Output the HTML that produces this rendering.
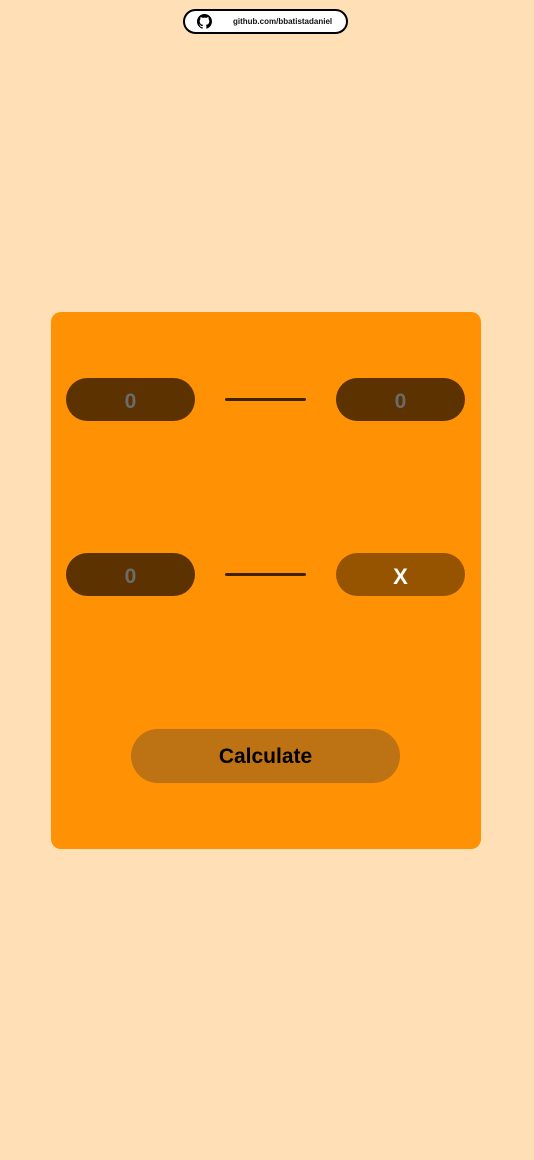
<!DOCTYPE html>
<html><head><meta charset="utf-8"><style>
html,body{margin:0;padding:0}
body{width:534px;height:1160px;background:#ffe0b6;position:relative;font-family:"Liberation Sans",sans-serif;overflow:hidden}
.badge{position:absolute;left:183px;top:9px;width:161px;height:21px;border:2px solid #000;border-radius:13px;background:#fff}
.badge span{position:absolute;left:48px;top:6px;font-size:8px;font-weight:bold;color:#111}
.badge svg{position:absolute;left:12px;top:3px}
.card{position:absolute;left:51px;top:312px;width:430px;height:537px;background:#ff9204;border-radius:10px}
.pill{position:absolute;width:129px;height:43px;border-radius:22px;background:#5c3200;color:#6b6b6b;font-weight:bold;font-size:21px;text-align:center;line-height:47px}
.line{position:absolute;width:81px;height:3px;border-radius:2px;background:#3d2200}
.x{background:#965400;color:#fff;font-size:22px}
.calc{position:absolute;left:80px;top:417px;width:269px;height:54px;border-radius:27px;background:#bd7213;color:#000;font-weight:bold;font-size:21px;text-align:center;line-height:56px}
</style></head><body>
<div class="badge"><svg width="15" height="15" viewBox="0 0 16 16"><path fill="#000" d="M8 0C3.58 0 0 3.58 0 8c0 3.540 2.29 6.53 5.47 7.59.4.07.55-.17.55-.38v-1.33c-2.230.48-2.7-1.07-2.7-1.07-.36-.92-.89-1.17-.89-1.17-.73-.5.06-.49.06-.49.8.06 1.23.83 1.23.83.71 1.22 1.870.87 2.33.66.07-.52.28-.87.5-1.07-1.78-.2-3.65-.89-3.65-3.95 0-.87.31-1.59.82-2.15-.08-.2-.36-1.02.08-2.12 0 0 .67-.21 2.2.82A7.6 7.6 0 018 3.86c.68 0 1.36.09 2 .27 1.53-1.04 2.2-.82 2.2-.82.44 1.1.16 1.92.08 2.12.51.56.82 1.27.82 2.15 0 3.07-1.87 3.75-3.65 3.95.29.25.54.73.54 1.48v2.2c0 .21.15.46.55.38A8 8 0 0016 8c0-4.42-3.58-8-8-8z"/></svg><span>github.com/bbatistadaniel</span></div>
<div class="card">
<div class="pill" style="left:15px;top:66px">0</div>
<div class="line" style="left:174px;top:86px"></div>
<div class="pill" style="left:285px;top:66px">0</div>
<div class="pill" style="left:15px;top:241px">0</div>
<div class="line" style="left:174px;top:261px"></div>
<div class="pill x" style="left:285px;top:241px">X</div>
<div class="calc">Calculate</div>
</div>
</body></html>
